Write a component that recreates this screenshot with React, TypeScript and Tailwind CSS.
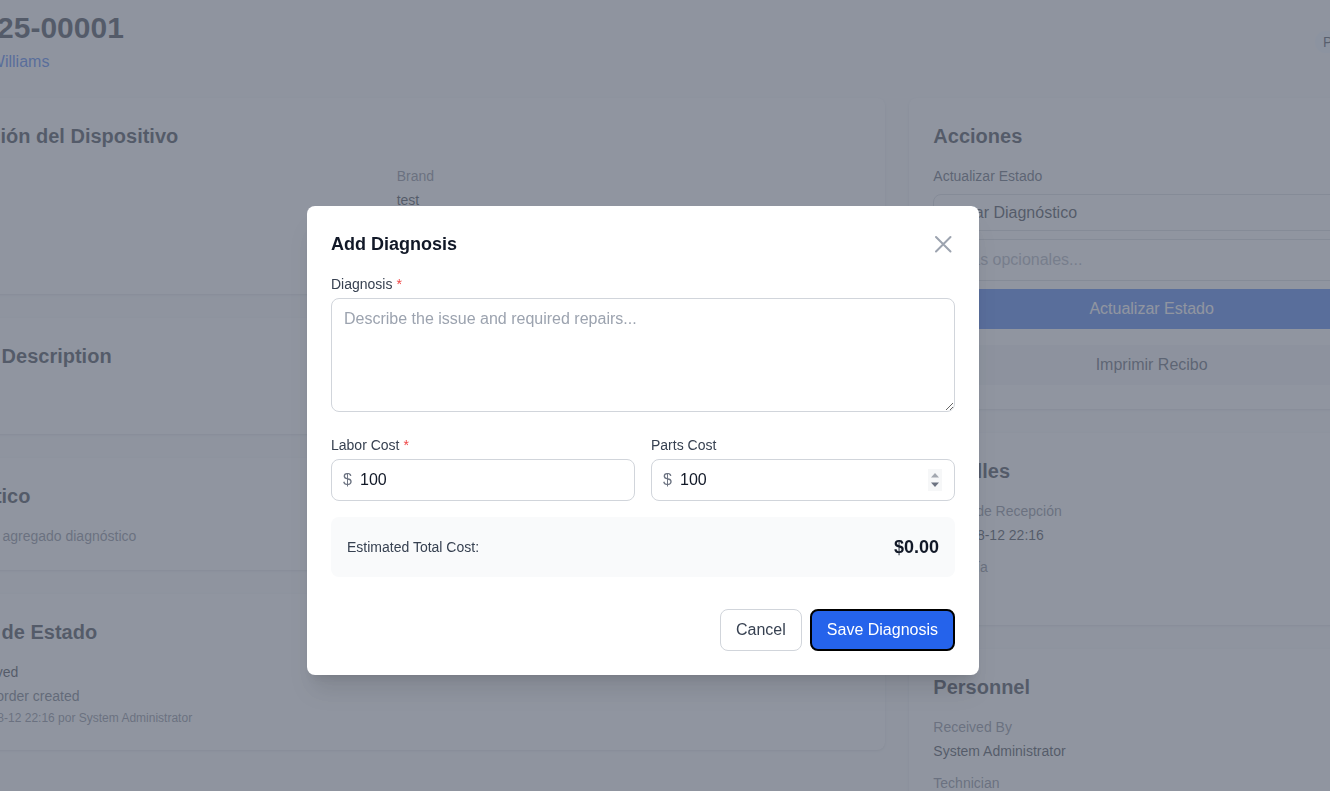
import { useState } from "react";

const DetailItem = ({ label, value }: { label: string; value: string }) => (
  <div>
    <p className="text-sm text-[#6b7280] mb-1">{label}</p>
    <p className="text-sm text-[#111827]">{value}</p>
  </div>
);

const Card = ({ title, children }: { title: string; children: React.ReactNode }) => (
  <div className="bg-white rounded-lg shadow p-6">
    <h2 className="text-xl font-bold text-[#111827] mb-4">{title}</h2>
    {children}
  </div>
);

const App = () => {
  const [diagnosis, setDiagnosis] = useState<string>("");
  const [laborCost, setLaborCost] = useState<string>("100");
  const [partsCost, setPartsCost] = useState<string>("100");

  return (
    <div className="relative h-[791px] w-full overflow-hidden bg-[#f9fafb] font-['Liberation_Sans',Arial,sans-serif]">
      {/* Page behind the modal (scrolled view) */}
      <div className="-ml-[108px] w-[1502px] pt-[10px]">
        {/* Header */}
        <div className="flex items-center justify-between mb-6">
          <div>
            <h1 className="text-3xl font-bold text-[#111827]">REP-2025-00001</h1>
            <p className="mt-1 text-base text-[#4b5563]">
              Cliente: <a className="text-[#2563eb]">Juan Williams</a>
            </p>
          </div>
          <span className="rounded-full bg-[#eff6ff] px-2 py-px text-sm text-[#1f2937]">
            Pendiente
          </span>
        </div>

        <div className="grid grid-cols-3 gap-6">
          {/* Left column */}
          <div className="col-span-2 space-y-6">
            <Card title="Información del Dispositivo">
              <div className="grid grid-cols-2 gap-4">
                <DetailItem label="Device Type" value="test" />
                <DetailItem label="Brand" value="test" />
                <DetailItem label="Model" value="test" />
                <DetailItem label="Serial Number" value="-" />
              </div>
            </Card>

            <Card title="Problem Description">
              <p className="text-base text-[#374151]">test</p>
            </Card>

            <Card title="Diagnóstico">
              <p className="text-sm text-[#6b7280]">Aún no se ha agregado diagnóstico</p>
            </Card>

            <Card title="Historial de Estado">
              <div className="flex gap-3">
                <div className="w-8 flex justify-center">
                  <div className="w-3 h-3 mt-1 rounded-full bg-[#2563eb]" />
                </div>
                <div>
                  <p className="text-sm text-[#111827]">Received</p>
                  <p className="text-sm text-[#4b5563] mt-1">Work order created</p>
                  <p className="text-xs text-[#6b7280] mt-1">
                    2025-08-12 22:16 por System Administrator
                  </p>
                </div>
              </div>
            </Card>
          </div>

          {/* Right column */}
          <div className="space-y-6">
            <Card title="Acciones">
              <label className="block text-sm text-[#374151] mb-2">Actualizar Estado</label>
              <div className="flex items-center justify-between rounded-lg border border-[#d1d5db] px-3 py-[5.5px] text-base text-[#111827]">
                <span>Iniciar Diagnóstico</span>
                <span className="text-[#6b7280]">▾</span>
              </div>
              <input
                placeholder="Notas opcionales..."
                className="mt-2 block w-full rounded-lg border border-[#d1d5db] px-3 py-2 text-base placeholder:text-[#9ca3af]"
              />
              <button className="mt-2 block w-full rounded-lg bg-[#2563eb] py-2 text-base text-white">
                Actualizar Estado
              </button>
              <button className="mt-4 block w-full rounded-lg bg-[#f3f4f6] py-2 text-base text-[#374151]">
                Imprimir Recibo
              </button>
            </Card>

            <Card title="Detalles">
              <div className="space-y-3">
                <DetailItem label="Fecha de Recepción" value="2025-08-12 22:16" />
                <DetailItem label="Garantía" value="No" />
              </div>
            </Card>

            <Card title="Personnel">
              <div className="space-y-3">
                <DetailItem label="Received By" value="System Administrator" />
                <DetailItem label="Technician" value="Not assigned" />
              </div>
            </Card>
          </div>
        </div>
      </div>

      {/* Modal overlay */}
      <div className="fixed inset-0 flex items-start justify-center bg-[#6b7280]/75 pt-[206px] pr-[44px]">
        <div className="w-[672px] rounded-lg bg-white p-6 shadow-xl">
          <div className="flex items-center justify-between mb-4">
            <h3 className="text-lg font-bold text-[#111827]">Add Diagnosis</h3>
            <button className="text-[#9ca3af]">
              <svg width="24" height="24" viewBox="0 0 24 24" fill="none" stroke="currentColor" strokeWidth="2" strokeLinecap="round">
                <path d="M5 5l14.5 14.5M19.5 5L5 19.5" />
              </svg>
            </button>
          </div>

          <label className="block text-sm text-[#374151] mb-1">
            Diagnosis <span className="text-[#ef4444]">*</span>
          </label>
          <textarea
            rows={4}
            value={diagnosis}
            onChange={(e) => setDiagnosis(e.target.value)}
            placeholder="Describe the issue and required repairs..."
            className="block w-full rounded-lg border border-[#d1d5db] px-3 py-2 text-base text-[#111827] placeholder:text-[#9ca3af]"
          />

          <div className="mt-[23px] grid grid-cols-2 gap-4">
            <div>
              <label className="block text-sm text-[#374151] mb-1">
                Labor Cost <span className="text-[#ef4444]">*</span>
              </label>
              <div className="relative">
                <span className="absolute left-3 top-1/2 -translate-y-1/2 text-base text-[#6b7280]">$</span>
                <input
                  value={laborCost}
                  onChange={(e) => setLaborCost(e.target.value)}
                  className="block w-full rounded-lg border border-[#d1d5db] py-2 pl-7 pr-3 text-base text-[#111827]"
                />
              </div>
            </div>
            <div>
              <label className="block text-sm text-[#374151] mb-1">Parts Cost</label>
              <div className="relative">
                <span className="absolute left-3 top-1/2 -translate-y-1/2 text-base text-[#6b7280]">$</span>
                <input
                  value={partsCost}
                  onChange={(e) => setPartsCost(e.target.value)}
                  className="block w-full rounded-lg border border-[#d1d5db] py-2 pl-7 pr-3 text-base text-[#111827]"
                />
                {/* number spinner */}
                <svg
                  className="absolute right-[13px] top-1/2 -translate-y-1/2"
                  width="14"
                  height="22"
                  viewBox="0 0 14 22"
                >
                  <rect width="14" height="22" fill="#f6f7f8" />
                  <path d="M3 8.5L7 4L11 8.5Z" fill="#a3a8b0" />
                  <path d="M3 13.5L7 18L11 13.5Z" fill="#6b7280" />
                </svg>
              </div>
            </div>
          </div>

          <div className="mt-4 flex items-center justify-between rounded-lg bg-[#f9fafb] p-4">
            <span className="text-sm text-[#374151]">Estimated Total Cost:</span>
            <span className="text-lg font-bold text-[#111827]">$0.00</span>
          </div>

          <div className="mt-8 flex items-center justify-end gap-2">
            <button className="rounded-lg border border-[#d1d5db] bg-white px-[15px] py-2 text-base text-[#374151]">
              Cancel
            </button>
            <button className="rounded-lg border-2 border-black bg-[#2563eb] px-[15px] py-[7px] text-base text-white">
              Save Diagnosis
            </button>
          </div>
        </div>
      </div>
    </div>
  );
};

export default App;
